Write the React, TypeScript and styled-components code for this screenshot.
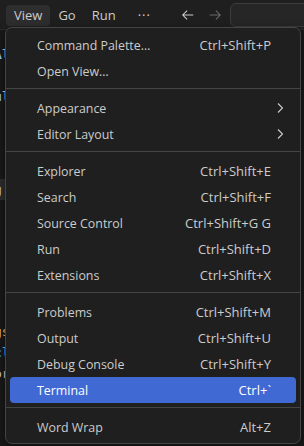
import React from "react";
import styled, { createGlobalStyle } from "styled-components";

const GlobalStyle = createGlobalStyle`
  html, body {
    margin: 0;
    padding: 0;
    background: #181818;
    overflow: hidden;
  }
  body {
    font-family: "Open Sans", "Noto Sans", sans-serif;
  }
`;

const Window = styled.div`
  position: relative;
  width: 304px;
  height: 446px;
  background: #181818;
  overflow: hidden;
`;

const TitleBar = styled.div`
  height: 30px;
  background: #1f1f1f;
  display: flex;
  align-items: center;
  padding-left: 6px;
  box-sizing: border-box;
  border-bottom: 1px solid #2b2b2b;
`;

const MenuButton = styled.div<{ active?: boolean }>`
  height: 21px;
  margin-top: 1px;
  padding: 0 8px;
  display: flex;
  align-items: center;
  border-radius: 4px;
  font-size: 13px;
  color: #cccccc;
  background: ${(p) => (p.active ? "#2e2e2e" : "transparent")};
`;

const Dots = styled(MenuButton)`
  margin-left: 6px;
  letter-spacing: 1px;
`;

const NavArrows = styled.div`
  display: flex;
  gap: 13px;
  margin-left: 22px;
  align-items: center;
`;

const SearchBox = styled.div`
  margin-left: auto;
  margin-right: -10px;
  width: 82px;
  height: 22px;
  margin-top: 1px;
  border: 1px solid #3c3c3c;
  border-radius: 6px;
  background: #262626;
`;

const Editor = styled.div`
  display: flex;
  flex-direction: column;
  padding-top: 14px;
  font-size: 13px;
  font-family: "DejaVu Sans Mono", monospace;
`;

const CodeLine = styled.div<{ color: string; shade?: boolean; gapTop?: number }>`
  height: 21px;
  line-height: 21px;
  color: ${(p) => p.color};
  margin-left: -6px;
  margin-top: ${(p) => p.gapTop ?? 0}px;
  width: 20px;
  background: ${(p) => (p.shade ? "#2a2d2e" : "transparent")};
  white-space: nowrap;
`;

const Menu = styled.div`
  position: absolute;
  left: 5px;
  top: 27px;
  width: 296px;
  box-sizing: border-box;
  padding: 4px 4px 3px;
  background: #1f1f1f;
  border: 1px solid #454545;
  border-radius: 7px;
  box-shadow: 0 2px 8px rgba(0, 0, 0, 0.4);
  display: flex;
  flex-direction: column;
`;

const Item = styled.div<{ selected?: boolean }>`
  height: 26px;
  display: flex;
  align-items: center;
  padding: 0 25px 0 27px;
  border-radius: 4px;
  font-size: 12.4px;
  color: ${(p) => (p.selected ? "#ffffff" : "#cccccc")};
  background: ${(p) => (p.selected ? "#4169d4" : "transparent")};
`;

const Label = styled.span`
  flex: 1;
  white-space: nowrap;
`;

const Shortcut = styled.span`
  white-space: nowrap;
  font-size: 13px;
`;

const Chevron = styled.span`
  display: flex;
  margin-right: -17px;
`;

const Separator = styled.div`
  height: 1px;
  background: #454545;
  margin: 4px -4px 6px;
`;

type Entry = { label: string; keys?: string; sub?: boolean; selected?: boolean } | "sep";

const entries: Entry[] = [
  { label: "Command Palette…", keys: "Ctrl+Shift+P" },
  { label: "Open View…" },
  "sep",
  { label: "Appearance", sub: true },
  { label: "Editor Layout", sub: true },
  "sep",
  { label: "Explorer", keys: "Ctrl+Shift+E" },
  { label: "Search", keys: "Ctrl+Shift+F" },
  { label: "Source Control", keys: "Ctrl+Shift+G G" },
  { label: "Run", keys: "Ctrl+Shift+D" },
  { label: "Extensions", keys: "Ctrl+Shift+X" },
  "sep",
  { label: "Problems", keys: "Ctrl+Shift+M" },
  { label: "Output", keys: "Ctrl+Shift+U" },
  { label: "Debug Console", keys: "Ctrl+Shift+Y" },
  { label: "Terminal", keys: "Ctrl+`", selected: true },
  "sep",
  { label: "Word Wrap", keys: "Alt+Z" },
];

const Arrow = ({ dir, color }: { dir: "left" | "right"; color: string }) => (
  <svg width="14" height="14" viewBox="0 0 16 16" fill="none" stroke={color} strokeWidth="1.2">
    {dir === "left" ? (
      <path d="M2 8h12M7 3L2 8l5 5" />
    ) : (
      <path d="M2 8h12M9 3l5 5-5 5" />
    )}
  </svg>
);

const ChevronIcon = () => (
  <svg width="16" height="16" viewBox="0 0 16 16" fill="none" stroke="#cccccc" strokeWidth="1.1">
    <path d="M6 3.5L10.5 8 6 12.5" />
  </svg>
);

export default function App() {
  return (
    <Window>
      <GlobalStyle />
      <TitleBar>
        <MenuButton active>View</MenuButton>
        <MenuButton>Go</MenuButton>
        <MenuButton>Run</MenuButton>
        <Dots>···</Dots>
        <NavArrows>
          <Arrow dir="left" color="#cccccc" />
          <Arrow dir="right" color="#6b6b6b" />
        </NavArrows>
        <SearchBox />
      </TitleBar>
      <Editor>
        <CodeLine color="#9cdcfe">Al</CodeLine>
        <CodeLine color="#181818"> </CodeLine>
        <CodeLine color="#9cdcfe">ul</CodeLine>
        <CodeLine color="#cccccc" shade gapTop={72}>g</CodeLine>
        <CodeLine color="#d7ba7d" gapTop={121}>gs</CodeLine>
        <CodeLine color="#4fc1ff">cl</CodeLine>
        <CodeLine color="#cccccc">or</CodeLine>
      </Editor>
      <Menu>
        {entries.map((e, i) =>
          e === "sep" ? (
            <Separator key={i} />
          ) : (
            <Item key={i} selected={e.selected}>
              <Label>{e.label}</Label>
              {e.keys && <Shortcut>{e.keys}</Shortcut>}
              {e.sub && (
                <Chevron>
                  <ChevronIcon />
                </Chevron>
              )}
            </Item>
          )
        )}
      </Menu>
    </Window>
  );
}
